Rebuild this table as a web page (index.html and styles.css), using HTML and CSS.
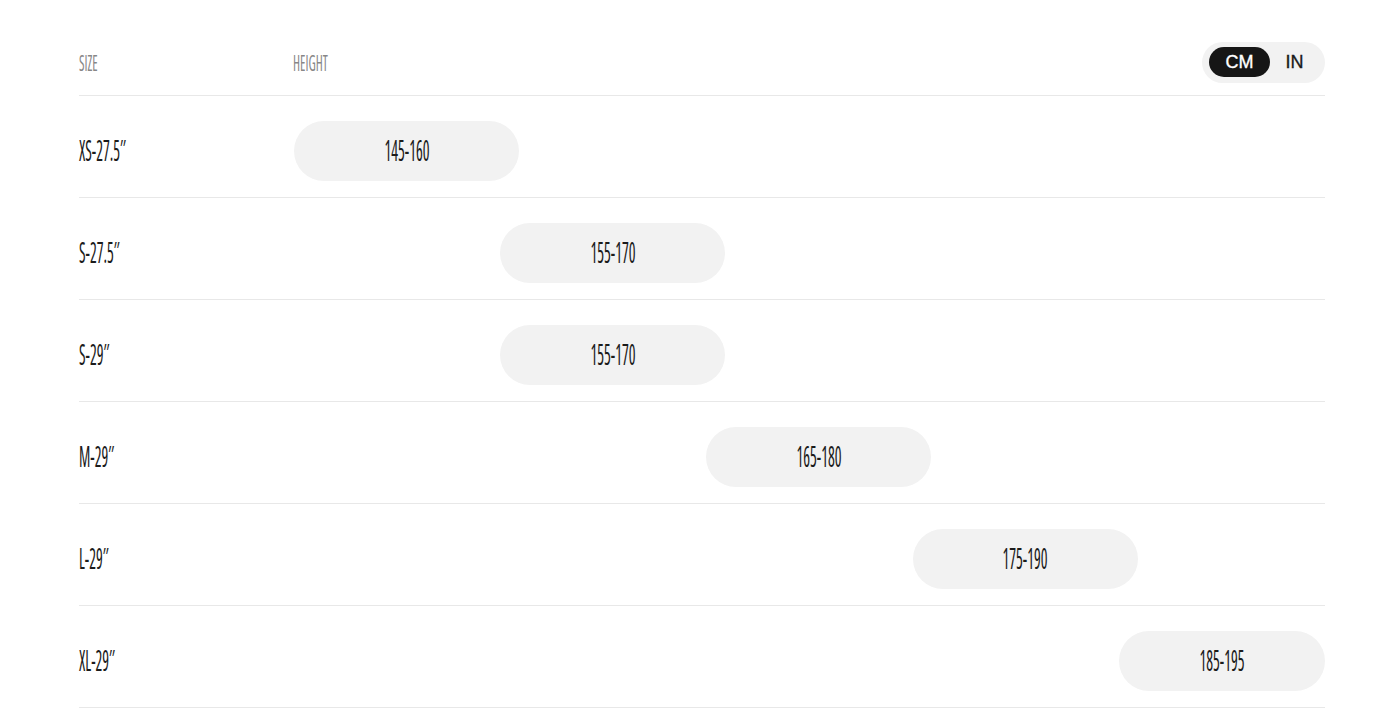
FILE: index.html
```html
<!DOCTYPE html>
<html lang="en">
<head>
<meta charset="utf-8">
<title>Size guide</title>
<link rel="stylesheet" href="styles.css">
</head>
<body>
<main class="chart">
  <div class="chart-head">
    <div class="head-label"><span class="cond">SIZE</span></div>
    <div class="head-track">
      <div class="head-label"><span class="cond">HEIGHT</span></div>
      <div class="unit-toggle">
        <button class="unit active">CM</button>
        <button class="unit">IN</button>
      </div>
    </div>
  </div>

  <div class="row">
    <div class="size"><span class="cond">XS-27.5″</span></div>
    <div class="track"><div class="range" style="--start:0%"><span class="cond">145-160</span></div></div>
  </div>
  <div class="row">
    <div class="size"><span class="cond">S-27.5″</span></div>
    <div class="track"><div class="range" style="--start:20%"><span class="cond">155-170</span></div></div>
  </div>
  <div class="row">
    <div class="size"><span class="cond">S-29″</span></div>
    <div class="track"><div class="range" style="--start:20%"><span class="cond">155-170</span></div></div>
  </div>
  <div class="row">
    <div class="size"><span class="cond">M-29″</span></div>
    <div class="track"><div class="range" style="--start:40%"><span class="cond">165-180</span></div></div>
  </div>
  <div class="row">
    <div class="size"><span class="cond">L-29″</span></div>
    <div class="track"><div class="range" style="--start:60%"><span class="cond">175-190</span></div></div>
  </div>
  <div class="row">
    <div class="size"><span class="cond">XL-29″</span></div>
    <div class="track"><div class="range" style="--start:80%"><span class="cond">185-195</span></div></div>
  </div>
</main>
</body>
</html>
```
FILE: styles.css
```css
* { box-sizing: border-box; }

html, body {
  margin: 0;
  padding: 0;
  background: #ffffff;
}

.chart {
  padding: 42px 68px 0 79px;
  font-family: "Open Sans", "Noto Sans", sans-serif;
  font-stretch: 75%;
}

.cond {
  display: inline-block;
  transform: translateY(-2px) scaleX(0.55);
  transform-origin: left center;
  white-space: nowrap;
}

.chart-head {
  display: grid;
  grid-template-columns: 214px 1fr;
  align-items: center;
  padding-bottom: 12px;
  border-bottom: 1px solid #e8e8e8;
}

.head-track {
  display: flex;
  align-items: center;
  justify-content: space-between;
}

.head-label {
  font-size: 22px;
  font-weight: 500;
  color: #878787;
  line-height: 1;
}

.head-label .cond {
  transform: translateY(-1px) scaleX(0.61);
}

.unit-toggle {
  display: flex;
  align-items: center;
  padding: 5px 6px 6px 7px;
  background: #f2f2f2;
  border-radius: 21px;
}

.unit {
  font-family: "Liberation Sans", Arial, sans-serif;
  font-stretch: normal;
  font-size: 18px;
  line-height: 1;
  height: 30px;
  border: 0;
  background: transparent;
  color: #1a1a1a;
  border-radius: 15px;
  padding: 0 15.5px;
  -webkit-text-stroke: 0.35px currentColor;
}

.unit.active {
  background: #161616;
  color: #ffffff;
  padding: 0 16.5px;
}

.row {
  display: grid;
  grid-template-columns: 215px 1fr;
  align-items: center;
  padding: 25px 0 16px;
  border-bottom: 1px solid #e8e8e8;
}

.size {
  font-size: 29px;
  font-weight: 500;
  color: #1b1b1b;
  line-height: 1;
}

.track {
  display: flex;
}

.range {
  margin-left: var(--start);
  width: min(225px, calc(100% - var(--start)));
  height: 60px;
  border-radius: 30px;
  background: #f2f2f2;
  display: flex;
  align-items: center;
  justify-content: center;
  font-size: 29px;
  font-weight: 500;
  color: #1b1b1b;
  line-height: 1;
}

.range .cond {
  transform-origin: center center;
}
```
